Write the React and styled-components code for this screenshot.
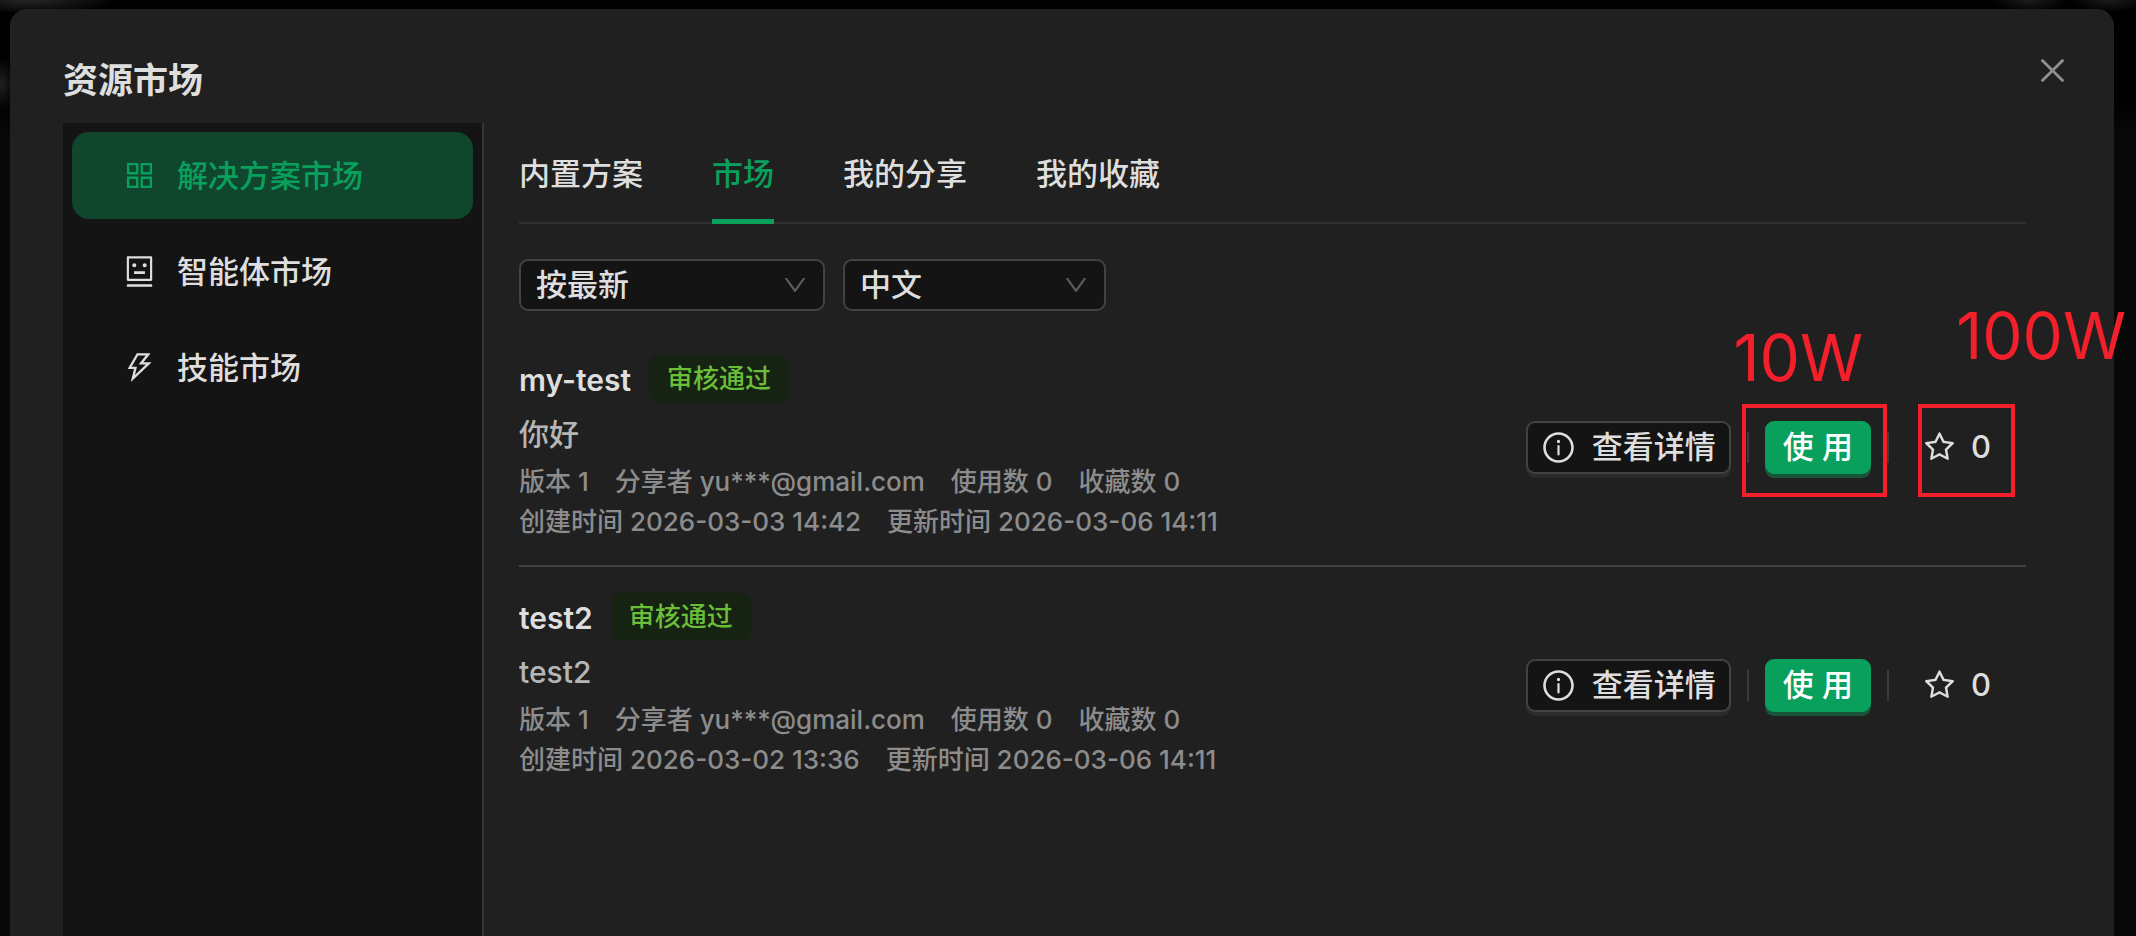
import React, { useState } from 'react'
import styled, { createGlobalStyle } from 'styled-components'
import {
  AiOutlineAppstore,
  AiOutlineClose,
  AiOutlineDown,
  AiOutlineInfoCircle,
  AiOutlineRobot,
  AiOutlineStar,
  AiOutlineThunderbolt,
} from 'react-icons/ai'

const GlobalStyle = createGlobalStyle`
  * {
    box-sizing: border-box;
  }

  body {
    margin: 0;
    background: #080808;
    color: #dedede;
    font-family: Inter, 'Noto Sans CJK SC', sans-serif;
    font-size: 31px;
    font-weight: 500;
    line-height: 48px;
  }

  button,
  select {
    margin: 0;
    color: inherit;
    font: inherit;
  }
`

const Page = styled.div`
  position: relative;
  display: flex;
  min-height: 100vh;
  padding: 9px 22px 0 10px;
  overflow: hidden;
  background:
    radial-gradient(90px 14px at 30px 0, #262626, transparent),
    radial-gradient(14px 26px at 2px 84px, #202020, transparent),
    radial-gradient(40px 12px at right 106px top 0, #1c1c1c, transparent),
    radial-gradient(40px 12px at right 26px top 0, #1c1c1c, transparent),
    linear-gradient(#000 0, #000 100px, #080808 136px);
`

const Modal = styled.section`
  display: flex;
  flex: 1;
  flex-direction: column;
  min-width: 0;
  padding: 0 88px 0 53px;
  border-radius: 17px 17px 0 0;
  background: #202020;
`

const Header = styled.header`
  display: flex;
  justify-content: space-between;
  height: 114px;
  margin-right: -44px;
  padding-top: 44px;
`

const Title = styled.h1`
  margin: 0;
  font-size: 35px;
  font-weight: 700;
  line-height: 54px;
`

const CloseButton = styled.button`
  display: flex;
  align-items: center;
  justify-content: center;
  width: 35px;
  height: 35px;
  padding: 0;
  border: 0;
  background: none;
  color: #909090;
  font-size: 37px;
`

const Body = styled.div`
  display: flex;
  flex: 1;
`

const Sidebar = styled.nav`
  display: flex;
  flex-direction: column;
  flex: none;
  gap: 9px;
  width: 421px;
  padding: 9px;
  border-right: 2px solid #363636;
  background: #141414;
`

const MenuItem = styled.button`
  display: flex;
  align-items: center;
  gap: 20px;
  height: 87px;
  padding: 0 50px;
  border: 0;
  border-radius: 17px;
  background: ${({ $active }) => ($active ? '#10452e' : 'transparent')};
  color: ${({ $active }) => ($active ? '#08a05c' : '#dedede')};

  svg {
    font-size: 35px;
  }
`

const Content = styled.main`
  flex: 1;
  min-width: 0;
  padding-left: 35px;
`

const Tabs = styled.div`
  display: flex;
  gap: 69px;
  height: 101px;
  border-bottom: 2px solid #303030;
`

const Tab = styled.button`
  height: 101px;
  padding: 6px 0 0;
  border: 0;
  border-bottom: 5px solid ${({ $active }) => ($active ? '#08a05c' : 'transparent')};
  background: none;
  color: ${({ $active }) => ($active ? '#08a05c' : '#dedede')};
`

const Filters = styled.div`
  display: flex;
  gap: 18px;
  margin: 35px 0 18px;
`

const SelectBox = styled.label`
  position: relative;
  width: ${({ $width }) => $width}px;

  select {
    display: block;
    width: 100%;
    height: 52px;
    padding: 0 15px;
    appearance: none;
    border: 2px solid #424242;
    border-radius: 9px;
    background: #141414;
  }

  svg {
    position: absolute;
    top: 12px;
    right: 16px;
    color: #5c5c5c;
    font-size: 28px;
    pointer-events: none;
  }
`

const List = styled.ul`
  margin: 0;
  padding: 0;
  list-style: none;
`

const Card = styled.li`
  display: flex;
  align-items: center;
  justify-content: space-between;
  padding: 26px 18px 23px 0;

  & + & {
    border-top: 2px solid #424242;
  }
`

const CardHead = styled.div`
  display: flex;
  align-items: flex-start;
  gap: 18px;
`

const CardTitle = styled.h2`
  margin: 0;
  font-size: 30px;
  font-weight: 600;
  line-height: 50px;
`

const Tag = styled.span`
  padding: 0 18px;
  border-radius: 9px;
  background: #162312;
  color: #6abe39;
  font-size: 26px;
`

const Description = styled.p`
  margin: 5px 0 4px;
  color: #b5b5b5;
  font-size: 30px;
`

const Meta = styled.div`
  display: flex;
  gap: 26px;
  color: #8c8c8c;
  font-size: 26px;
  line-height: 40px;
`

const Actions = styled.div`
  display: flex;
  align-items: center;
  gap: 16px;
  padding-bottom: 3px;
`

const Separator = styled.span`
  width: 2px;
  height: 31px;
  background: #3b3b3b;
`

const Button = styled.button`
  display: flex;
  align-items: center;
  gap: 16px;
  height: 53px;
  padding: 0 13px;
  border: 2px solid #424242;
  border-radius: 9px;
  background: #141414;
  box-shadow: 0 4px 0 #2b2b2b;
  white-space: pre;

  svg {
    font-size: 35px;
  }
`

const PrimaryButton = styled(Button)`
  padding: 0 16px;
  border-color: #08a05c;
  background: #08a05c;
  box-shadow: 0 4px 0 #19543a;
  color: #fff;
`

const StarButton = styled(Button)`
  gap: 14px;
  padding: 0 15px;
  border-color: transparent;
  background: none;
  box-shadow: none;
`

/* review marks drawn over the page */
const MarkBox = styled.div`
  position: absolute;
  top: 404px;
  right: ${({ $right }) => $right}px;
  width: ${({ $width }) => $width}px;
  height: 93px;
  border: 4px solid #f31f2a;
  pointer-events: none;
`

const MarkText = styled.span`
  position: absolute;
  top: ${({ $top }) => $top}px;
  right: ${({ $right }) => $right}px;
  color: #f31f2a;
  font-size: 64px;
  font-weight: 400;
  line-height: 72px;
  pointer-events: none;
`

const menu = [
  { label: '解决方案市场', icon: AiOutlineAppstore },
  { label: '智能体市场', icon: AiOutlineRobot },
  { label: '技能市场', icon: AiOutlineThunderbolt },
]

const tabs = ['内置方案', '市场', '我的分享', '我的收藏']

const items = [
  {
    name: 'my-test',
    description: '你好',
    created: '2026-03-03 14:42',
    updated: '2026-03-06 14:11',
  },
  {
    name: 'test2',
    description: 'test2',
    created: '2026-03-02 13:36',
    updated: '2026-03-06 14:11',
  },
]

function Filter({ label, width, options }) {
  return (
    <SelectBox $width={width}>
      <select aria-label={label}>
        {options.map((option) => (
          <option key={option}>{option}</option>
        ))}
      </select>
      <AiOutlineDown />
    </SelectBox>
  )
}

function ResourceCard({ item }) {
  return (
    <Card>
      <div>
        <CardHead>
          <CardTitle>{item.name}</CardTitle>
          <Tag>审核通过</Tag>
        </CardHead>
        <Description>{item.description}</Description>
        <Meta>
          <span>版本 1</span>
          <span>分享者 yu***@gmail.com</span>
          <span>使用数 0</span>
          <span>收藏数 0</span>
        </Meta>
        <Meta>
          <span>创建时间 {item.created}</span>
          <span>更新时间 {item.updated}</span>
        </Meta>
      </div>
      <Actions>
        <Button type="button">
          <AiOutlineInfoCircle />
          查看详情
        </Button>
        <Separator />
        <PrimaryButton type="button">使 用</PrimaryButton>
        <Separator />
        <StarButton type="button">
          <AiOutlineStar />0
        </StarButton>
      </Actions>
    </Card>
  )
}

function App() {
  const [section, setSection] = useState('解决方案市场')
  const [tab, setTab] = useState('市场')

  return (
    <Page>
      <GlobalStyle />
      <Modal>
        <Header>
          <Title>资源市场</Title>
          <CloseButton type="button" aria-label="关闭">
            <AiOutlineClose />
          </CloseButton>
        </Header>
        <Body>
          <Sidebar>
            {menu.map(({ label, icon: Icon }) => (
              <MenuItem
                key={label}
                type="button"
                $active={label === section}
                onClick={() => setSection(label)}
              >
                <Icon />
                {label}
              </MenuItem>
            ))}
          </Sidebar>
          <Content>
            <Tabs>
              {tabs.map((label) => (
                <Tab
                  key={label}
                  type="button"
                  $active={label === tab}
                  onClick={() => setTab(label)}
                >
                  {label}
                </Tab>
              ))}
            </Tabs>
            <Filters>
              <Filter label="排序" width={306} options={['按最新']} />
              <Filter label="语言" width={263} options={['中文']} />
            </Filters>
            <List>
              {items.map((item) => (
                <ResourceCard key={item.name} item={item} />
              ))}
            </List>
          </Content>
        </Body>
      </Modal>

      <MarkText $top={322} $right={273}>
        10W
      </MarkText>
      <MarkText $top={300} $right={10}>
        100W
      </MarkText>
      <MarkBox $right={249} $width={145} />
      <MarkBox $right={121} $width={97} />
    </Page>
  )
}

export default App
